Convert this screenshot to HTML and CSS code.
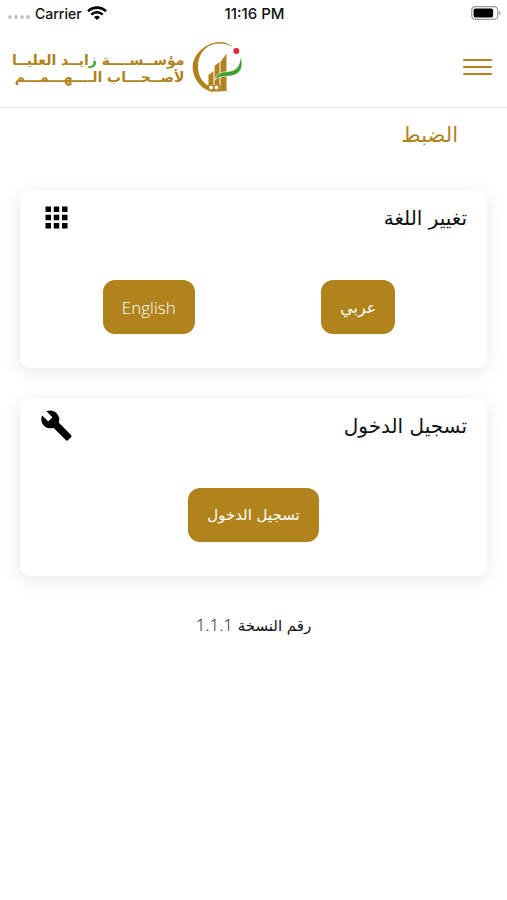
FILE: index.html
```html
<!DOCTYPE html>
<html lang="ar" dir="rtl">
<head>
    <meta charset="UTF-8">
    <meta name="viewport" content="width=device-width, initial-scale=1.0">
    <title>الضبط</title>
    <link rel="stylesheet" href="styles.css">
</head>
<body>
    <div class="status-bar" dir="ltr">
        <div class="status-left">
            <span class="signal"><i></i><i></i><i></i><i></i></span>
            <span>Carrier</span>
            <svg class="wifi" viewBox="0 0 20 14" width="20" height="14">
                <path d="M1 5.2a13 13 0 0 1 18 0" fill="none" stroke="#000" stroke-width="2.6"/>
                <path d="M4.3 8.6a8.2 8.2 0 0 1 11.4 0" fill="none" stroke="#000" stroke-width="2.4"/>
                <path d="M7 11.2a4.4 4.4 0 0 1 6 0L10 14z"/>
            </svg>
        </div>
        <div class="status-time">11:16 PM</div>
        <div class="status-right">
            <svg viewBox="0 0 30 14" width="30" height="14">
                <rect x="0.7" y="0.7" width="26" height="12.6" rx="3.6" fill="#fff" stroke="#999" stroke-width="1.2"/>
                <rect x="2.6" y="2.5" width="19.5" height="9" rx="1.8"/>
                <path d="M28 5v4q1.5-.6 1.5-2T28 5z" fill="#999"/>
            </svg>
        </div>
    </div>

    <header class="header">
        <button class="menu" type="button" aria-label="القائمة">
            <span></span><span></span><span></span>
        </button>
        <a class="logo" href="#">
            <svg class="logo-mark" viewBox="0 0 52 52" width="52" height="52">
                <path d="M42 6.5C35 0 24-1 15 4.5 5 10-1 20 1 30c2 11 10 19 20 21l-1-4C11 43 6 35 6 26 6 12 15 3 26 2.500c6-.2 11 1 16 4z" fill="#b0831c"/>
                <path d="M16.5 34l5-4v15h-5zM22.500 25l5-4v24h-5zM28.500 21l6-8.500V50h-6z" fill="#b0831c"/>
                <path d="M15 44h13v-2l1 8.500H19z" fill="#b0831c"/>
                <circle cx="19" cy="46.5" r="1.9" fill="#fff"/>
                <circle cx="24.5" cy="46.5" r="1.9" fill="#fff"/>
                <path d="M23 39c1-7 7-8 13-8.500 8-.6 12-5 12.500-15 3.500 8 1 16-6 18.500-7 2.600-14-.5-19.500 5z" fill="#43a030" stroke="#fff" stroke-width=".6"/>
                <circle cx="44.3" cy="10" r="3" fill="#e5253c"/>
            </svg>
            <span class="logo-text">
                <span>مؤســســــة <b>ز</b>ايــد العليــا</span>
                <span>لأصــحـــاب الــــهـــمـــم</span>
            </span>
        </a>
    </header>

    <main class="content">
        <h1 class="page-title">الضبط</h1>

        <section class="card">
            <div class="card-header">
                <h2>تغيير اللغة</h2>
                <svg viewBox="0 0 24 24" width="33" height="33">
                    <path d="M4 8h4V4H4v4zm6 12h4v-4h-4v4zm-6 0h4v-4H4v4zm0-6h4v-4H4v4zm6 0h4v-4h-4v4zm6-10v4h4V4h-4zm-6 4h4V4h-4v4zm6 6h4v-4h-4v4zm0 6h4v-4h-4v4z"/>
                </svg>
            </div>
            <div class="card-actions two">
                <button class="btn" type="button">عربي</button>
                <button class="btn latin" type="button" lang="en">English</button>
            </div>
        </section>

        <section class="card">
            <div class="card-header">
                <h2>تسجيل الدخول</h2>
                <svg viewBox="0 0 24 24" width="33" height="33">
                    <path d="M22.7 19l-9.1-9.1c.9-2.3.4-5-1.5-6.900-2-2-5-2.400-7.400-1.300L9 6 6 9 1.600 4.700C.4 7.100.9 10.100 2.900 12.100c1.900 1.900 4.600 2.400 6.900 1.500l9.100 9.100c.4.4 1 .4 1.400 0l2.300-2.300c.5-.4.5-1.100.1-1.400z"/>
                </svg>
            </div>
            <div class="card-actions">
                <button class="btn login" type="button">تسجيل الدخول</button>
            </div>
        </section>

        <p class="version">رقم النسخة <span class="latin">1.1.1</span></p>
    </main>
</body>
</html>
```
FILE: styles.css
```css
* {
    box-sizing: border-box;
}
body {
    margin: 0;
    background-color: #fff;
    color: #111;
    font-family: "DejaVu Sans", sans-serif;
}

/* Status bar */
.status-bar {
    display: grid;
    grid-template-columns: 1fr auto 1fr;
    align-items: center;
    height: 26px;
    padding: 0 6px 0 8px;
    font: 500 14px "Inter", sans-serif;
}
.status-left {
    display: flex;
    align-items: center;
    gap: 5px;
}
.status-time {
    font-size: 15px;
}
.status-right {
    display: flex;
    justify-content: flex-end;
}
.signal {
    display: flex;
    gap: 2px;
    padding-top: 8px;
}
.signal i {
    width: 4px;
    height: 4px;
    border-radius: 50%;
    background-color: #c4c4c4;
}

/* Header */
.header {
    display: flex;
    justify-content: space-between;
    align-items: center;
    height: 82px;
    padding: 0 15px 0 12px;
    border-bottom: 1px solid #e4e5e9;
}
.menu {
    display: flex;
    flex-direction: column;
    gap: 5px;
    padding: 0;
    border: 0;
    background: none;
    cursor: pointer;
}
.menu span {
    width: 29px;
    height: 2px;
    border-radius: 1px;
    background-color: #b0831c;
}
.logo {
    display: flex;
    align-items: center;
    gap: 8px;
    color: #b0831c;
    text-decoration: none;
}
.logo-text {
    display: flex;
    flex-direction: column;
    padding-top: 4px;
    font-size: 14px;
    font-weight: bold;
    line-height: 17px;
    white-space: nowrap;
}
.logo-text b {
    color: #43a030;
}

/* Content */
.content {
    padding: 0 20px;
}
.page-title {
    margin: 0 29px 40px;
    padding-top: 12px;
    color: #b0831c;
    font-size: 21px;
    font-weight: normal;
    line-height: 30px;
}
.card {
    margin-bottom: 30px;
    padding: 11px 20px 34px;
    border-radius: 10px;
    background-color: #fff;
    box-shadow: 0 4px 18px rgba(0, 0, 0, 0.1);
}
.card-header {
    display: flex;
    justify-content: space-between;
    align-items: center;
    margin-bottom: 46px;
}
.card-header h2 {
    margin: 0;
    font-size: 20px;
    font-weight: normal;
    line-height: 30px;
}
.card-actions {
    display: grid;
    justify-items: center;
    padding: 0 4px;
}
.card-actions.two {
    grid-template-columns: 1fr 1fr;
}
.btn {
    height: 54px;
    padding: 0 19px;
    border: 0;
    border-radius: 12px;
    background-color: #b0831c;
    color: #fff;
    font-family: "DejaVu Sans", sans-serif;
    font-size: 16px;
    cursor: pointer;
}
.btn.login {
    font-size: 15px;
}
.latin {
    font-family: "Open Sans", sans-serif;
    font-size: 17px;
    font-weight: 300;
}
.version {
    margin: 0;
    padding-top: 4px;
    font-size: 15px;
    line-height: 30px;
    text-align: center;
}
```
